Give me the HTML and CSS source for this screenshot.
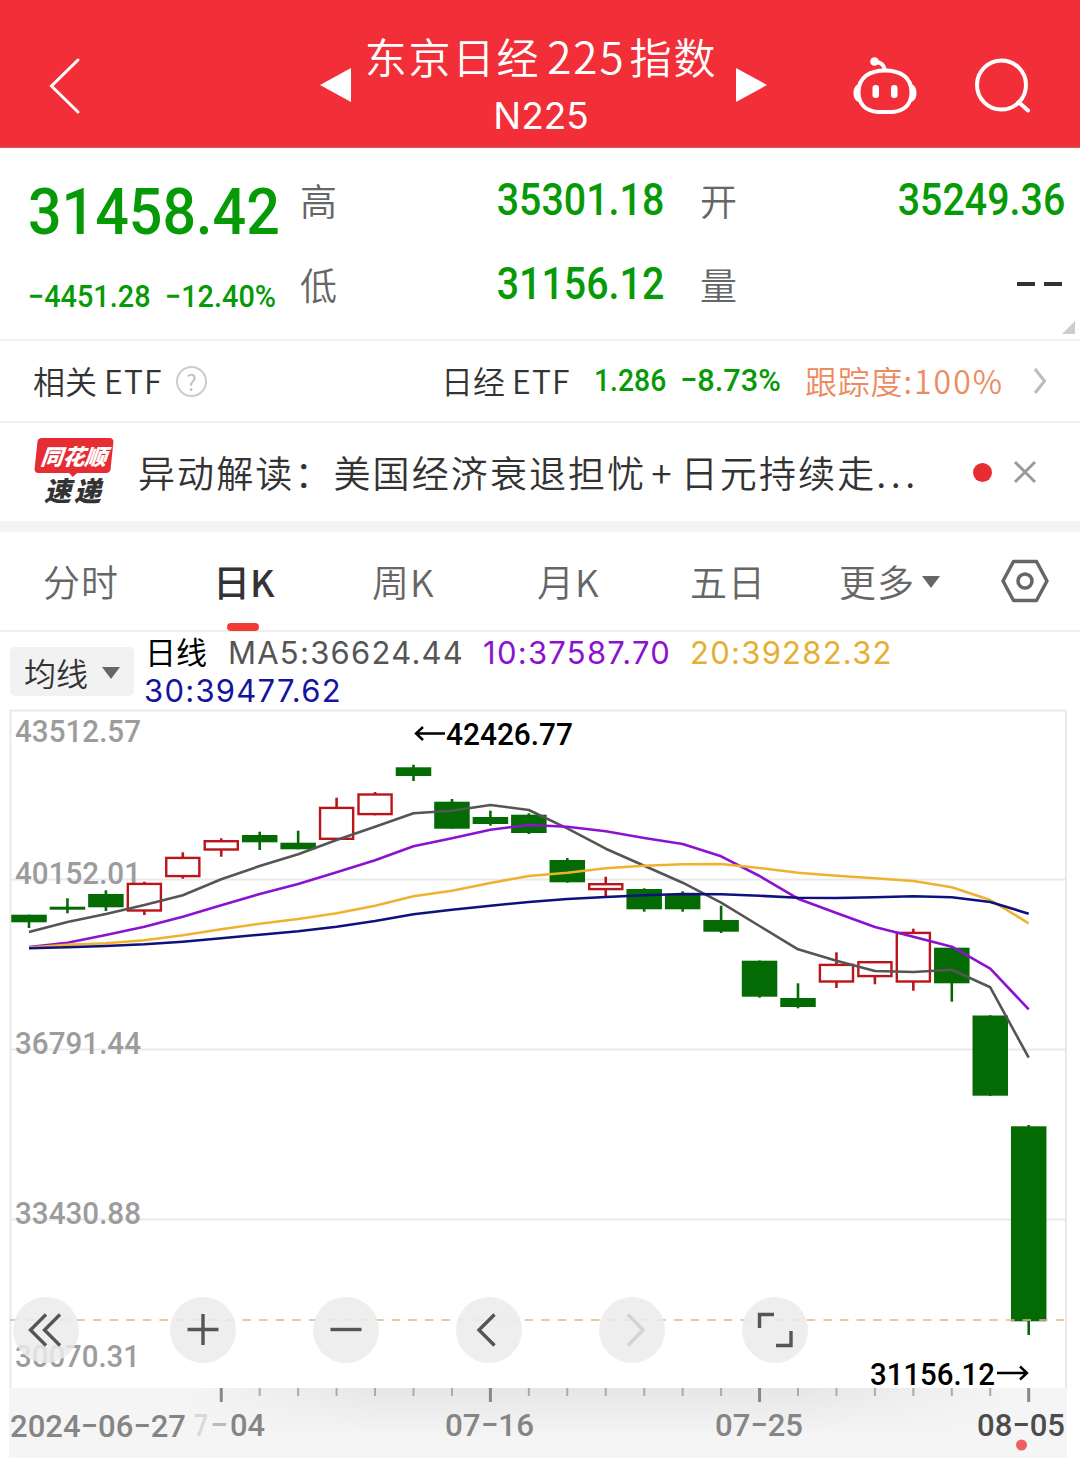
FILE: index.html
```html
<!DOCTYPE html>
<html lang="zh-CN">
<head>
    <meta charset="UTF-8">
    <meta name="viewport" content="width=device-width, initial-scale=1.0">
    <title>东京日经225指数</title>
    <link rel="stylesheet" href="styles.css">
</head>
<body>
    <header class="header">
        <svg class="back" width="36" height="60" viewBox="0 0 36 60"><path d="M31 4 4.500 30 31 56"/></svg>
        <div class="switcher">
            <svg width="32" height="36" viewBox="0 0 32 36"><path d="M0 17 31 0v34z"/></svg>
            <div class="title">
                <h1>东京日经<span>225</span>指数</h1>
                <p>N225</p>
            </div>
            <svg width="32" height="36" viewBox="0 0 32 36"><path d="M32 17 1 0v34z"/></svg>
        </div>
        <div class="header-icons">
            <svg width="64" height="60" viewBox="0 0 64 60">
                <path d="M32 14.500C47 14.500 58.500 21 58.500 36c0 13-8 19-19 20H25C13.500 55 5.500 49 5.500 36 5.500 21 17 14.500 32 14.500z"/>
                <path d="M22 6c6 0 9 3 10 8"/>
                <path class="solid" d="M6 28c-4 1-5.500 5-5.500 9S2 45 6 46zM58 28c4 1 5.500 5 5.500 9S62 45 58 46z"/>
                <circle class="solid" cx="21.500" cy="5.500" r="4.300"/>
                <rect class="solid" x="19.500" y="29" width="6.500" height="13" rx="3"/>
                <rect class="solid" x="38" y="29" width="6.500" height="13" rx="3"/>
            </svg>
            <svg class="search" width="60" height="60" viewBox="0 0 60 60">
                <circle cx="27.500" cy="29" r="24.500"/>
                <path d="M44.500 46 54 54.500"/>
            </svg>
        </div>
    </header>

    <section class="quote">
        <div class="price">
            <div class="num last">31458.42</div>
            <div class="change"><span class="num">−4451.28</span><span class="num">−12.40%</span></div>
        </div>
        <dl class="stats">
            <dt>高</dt><dd><span class="num">35301.18</span></dd>
            <dt>开</dt><dd><span class="num">35249.36</span></dd>
            <dt>低</dt><dd><span class="num">31156.12</span></dd>
            <dt>量</dt><dd class="none"><i></i><i></i></dd>
        </dl>
        <span class="corner"></span>
    </section>

    <section class="etf">
        <span class="etf-label">相关<b>ETF</b></span>
        <span class="help">?</span>
        <span class="etf-name">日经<b>ETF</b></span>
        <span class="num etf-price">1.286</span>
        <span class="num etf-rate">−8.73%</span>
        <span class="track">跟踪度<b>:100%</b></span>
        <svg class="more" width="14" height="28" viewBox="0 0 14 28"><path d="M2 2 11.500 14 2 26"/></svg>
    </section>

    <section class="news">
        <div class="logo">
            <span class="logo-top">同花顺</span>
            <span class="logo-bottom">速递</span>
        </div>
        <p class="news-text">异动解读：美国经济衰退担忧<span class="plus">+</span>日元持续走<span class="dots">...</span></p>
        <span class="dot"></span>
        <svg class="close" width="24" height="24" viewBox="0 0 24 24"><path d="M2 2 22 22M22 2 2 22"/></svg>
    </section>

    <nav class="tabs">
        <a class="tab">分时</a>
        <a class="tab active">日K</a>
        <a class="tab">周K</a>
        <a class="tab">月K</a>
        <a class="tab">五日</a>
        <a class="tab">更多<i class="caret"></i></a>
        <svg class="settings" width="48" height="44" viewBox="0 0 48 44">
            <path d="M12.500 2.500H35.500L46 22 35.500 41.500H12.500L2 22z"/>
            <circle cx="24" cy="22" r="7"/>
        </svg>
    </nav>

    <section class="legend">
        <button class="ma-button">均线<i class="caret"></i></button>
        <div class="ma-list">
            <span class="period">日线</span>
            <span class="ma5">MA5:36624.44</span>
            <span class="ma10">10:37587.70</span>
            <span class="ma20">20:39282.32</span>
            <span class="ma30">30:39477.62</span>
        </div>
    </section>

    <section class="chart">
        <svg id="chart" width="1080" height="749" viewBox="0 709 1080 749">
            <defs>
                <linearGradient id="shade" x1="0" y1="0" x2="0" y2="1">
                    <stop offset="0" stop-color="#e6e6e6"/>
                    <stop offset="0.700" stop-color="#f5f5f5"/>
                </linearGradient>
                <linearGradient id="sides" x1="0" y1="0" x2="1" y2="0">
                    <stop offset="0.160" stop-color="#f5f5f5"/>
                    <stop offset="0.350" stop-color="#f5f5f5" stop-opacity="0"/>
                    <stop offset="0.750" stop-color="#f5f5f5" stop-opacity="0"/>
                    <stop offset="0.950" stop-color="#f5f5f5"/>
                </linearGradient>
            </defs>
            <g class="grid">
                <path d="M10.500 1388V710.500H1066V1388"/>
                <path d="M10 879.500H1066M10 1049.500H1066M10 1219.500H1066"/>
            </g>
            <rect x="9" y="1388" width="1058" height="70" fill="url(#shade)"/>
            <rect x="9" y="1388" width="1058" height="70" fill="url(#sides)"/>
            <g class="scale">
                <text x="15" y="741.500" textLength="126">43512.57</text>
                <text x="15" y="884" textLength="126">40152.01</text>
                <text x="15" y="1054" textLength="126">36791.44</text>
                <text x="15" y="1224" textLength="126">33430.88</text>
                <text x="15" y="1367" textLength="125">30070.31</text>
            </g>
            <g id="candles"></g>
            <g id="averages"></g>
            <path class="current" d="M10 1320H1066"/>
            <g id="ticks"></g>
            <g class="marks">
                <path d="M445 733.500H416M423 727 416 733.500 423 740"/>
                <text x="446" y="744.500" textLength="127">42426.77</text>
                <text x="870" y="1384.500" textLength="125">31156.12</text>
                <path d="M997 1373H1027M1020 1366.500 1027 1373 1020 1379.500"/>
            </g>
            <g class="dates">
                <text x="10" y="1437" textLength="176">2024−06−27</text>
                <text x="194" y="1436" textLength="14" class="faint">7</text>
                <text x="210" y="1436" textLength="18" class="half">−</text>
                <text x="230" y="1436" textLength="35">04</text>
                <text x="445" y="1436" textLength="89">07−16</text>
                <text x="715" y="1436" textLength="88">07−25</text>
                <text x="977" y="1436" textLength="88" class="latest">08−05</text>
            </g>
            <circle cx="1021.500" cy="1445" r="5.500" fill="#ee5f64"/>
        </svg>
        <div class="tools">
            <button><svg viewBox="0 0 66 66"><path d="M33 17.500 17.500 33 33 48.500M47 17.500 31.500 33 47 48.500"/></svg></button>
            <button><svg viewBox="0 0 66 66"><path d="M33 17V48M17.500 32.500H48.500"/></svg></button>
            <button><svg viewBox="0 0 66 66"><path d="M17.500 32.500H48.500"/></svg></button>
            <button><svg viewBox="0 0 66 66"><path d="M38.500 17.500 23 33 38.500 48.500"/></svg></button>
            <button class="disabled"><svg viewBox="0 0 66 66"><path d="M29 17.500 44 33 29 48.500"/></svg></button>
            <button><svg viewBox="0 0 66 66"><path d="M17.500 31V17.500H32M49 34V48.500H34"/></svg></button>
        </div>
    </section>

    <script src="chart.js"></script>
</body>
</html>
```
FILE: styles.css
```css
* {
    margin: 0;
    padding: 0;
    box-sizing: border-box;
}

body {
    width: 1080px;
    font-family: 'Noto Sans CJK SC', sans-serif;
    font-weight: 350;
    background: #fff;
    color: #333;
    overflow-x: hidden;
}

svg {
    display: block;
    flex: none;
}

i {
    font-style: normal;
}

button {
    border: none;
    font: inherit;
}

/* condensed digits */
.num {
    display: inline-block;
    font-family: Roboto, sans-serif;
    font-weight: 500;
    color: #069a06;
    white-space: nowrap;
    transform: scaleX(0.885);
    transform-origin: left center;
}

.caret {
    display: inline-block;
    border: 9px solid transparent;
    border-top: 12px solid #666;
    border-bottom: none;
}

/* header */
.header {
    height: 148px;
    display: flex;
    align-items: center;
    background: #f22f38;
    border-bottom: 1px solid #c9605f;
    color: #fff;
    padding: 24px 46px 0 47px;
}

.header svg {
    fill: none;
    stroke: #fff;
    stroke-width: 4;
    stroke-linecap: round;
}

.header .back {
    stroke-width: 3;
}

.switcher {
    display: flex;
    align-items: center;
    margin-left: 237px;
    width: 447px;
    justify-content: space-between;
}

.header .switcher svg {
    fill: #fff;
    stroke: none;
}

.title {
    text-align: center;
    margin: 2px 5px 0 0;
}

.title h1 {
    font-size: 42px;
    font-weight: 350;
    line-height: 58px;
    letter-spacing: 1.9px;
    white-space: nowrap;
}

.title h1 span {
    font-size: 44px;
    margin: 0 4px 0 7px;
}

.title p {
    font-size: 37px;
    line-height: 62px;
    font-family: Inter, sans-serif;
    font-weight: 400;
}

.header-icons {
    display: flex;
    gap: 57px;
    margin-left: 86px;
}

.header-icons .solid {
    fill: #fff;
    stroke: none;
}

/* quote */
.quote {
    position: relative;
    height: 193px;
    display: flex;
    border-bottom: 2px solid #f0f0f0;
}

.price {
    width: 300px;
    padding-left: 28px;
}

.last {
    font-size: 65px;
    line-height: 80px;
    margin-top: 24px;
    transform: scaleX(0.91);
}

.change {
    display: flex;
    font-size: 31px;
    line-height: 40px;
    margin-top: 25px;
}

.change .num {
    width: 140px;
    transform: scaleX(0.93);
}

.change .num + .num {
    margin-left: 2px;
}

.stats {
    flex: 1;
    display: grid;
    grid-template-columns: 37px 327px 73px 1fr;
    grid-template-rows: 84px 84px;
    padding: 10px 15px 0 0;
    align-items: center;
}

.stats dt {
    font-size: 37px;
    color: #666;
}

.stats dt:nth-of-type(even) {
    justify-self: end;
}

.stats dd {
    text-align: right;
}

.stats .num {
    font-size: 44px;
    transform: scaleX(0.895);
    transform-origin: right center;
}

.stats .none {
    display: flex;
    justify-content: flex-end;
    gap: 9px;
    padding-right: 3px;
}

.none i {
    width: 18px;
    height: 4px;
    background: #333;
}

.corner {
    position: absolute;
    right: 5px;
    bottom: 5px;
    border-left: 13px solid transparent;
    border-bottom: 13px solid #ccc;
}

/* related etf */
.etf {
    height: 82px;
    display: flex;
    align-items: center;
    border-bottom: 2px solid #eee;
    padding-left: 33px;
    font-size: 32px;
    white-space: nowrap;
}

.etf b {
    font-weight: 350;
    letter-spacing: 1.200px;
    margin-left: 7px;
}

.etf > span {
    margin-bottom: 3px;
}

.etf-label {
    width: 143px;
}

.etf .help {
    width: 31px;
    height: 31px;
    margin-bottom: 0;
    border: 2px solid #ccc;
    border-radius: 50%;
    color: #bbb;
    font-size: 22px;
    line-height: 27px;
    text-align: center;
}

.etf-name {
    margin-left: 234px;
    width: 153px;
}

.etf-price {
    width: 86px;
}

.etf-rate {
    width: 125px;
}

.etf .etf-rate {
    transform: scaleX(0.96);
}

.track {
    color: #ee8a5f;
    width: 228px;
    letter-spacing: 0.800px;
}

.etf .track b {
    margin: 0;
    letter-spacing: 2px;
}

.more {
    fill: none;
    stroke: #bbb;
    stroke-width: 3;
}

/* news */
.news {
    height: 109px;
    display: flex;
    align-items: center;
    border-bottom: 11px solid #f4f4f4;
    padding-left: 36px;
}

.logo {
    width: 102px;
    display: flex;
    flex-direction: column;
    font-weight: 900;
    font-style: italic;
    font-size: 22px;
    white-space: nowrap;
}

.logo-top {
    position: relative;
    width: 76px;
    height: 35px;
    border-radius: 4px;
    line-height: 34px;
    text-align: center;
    color: #fff;
    background: #e52d33;
    transform: skewX(-6deg);
}

.logo-top::after {
    content: '';
    position: absolute;
    left: 34px;
    top: 34px;
    border: 5px solid transparent;
    border-top-color: #e52d33;
    border-bottom: none;
}

.logo-bottom {
    padding-left: 8px;
    line-height: 33px;
    font-size: 27px;
    letter-spacing: 3px;
}

.news-text {
    width: 834px;
    font-size: 37px;
    letter-spacing: 2.100px;
    white-space: nowrap;
}

.plus {
    margin: 0 7px 0 5px;
}

.dots {
    letter-spacing: 4.500px;
}

.dot {
    width: 19px;
    height: 19px;
    border-radius: 50%;
    background: #e62e32;
    margin-left: 1px;
}

.close {
    margin-left: 21px;
    stroke: #999;
    stroke-width: 3;
}

/* tabs */
.tabs {
    height: 100px;
    display: flex;
    align-items: center;
    border-bottom: 2px solid #eee;
    padding-left: 43px;
}

.tab {
    position: relative;
    font-size: 37px;
    letter-spacing: 1px;
    color: #666;
    white-space: nowrap;
    width: 170px;
}

.tab.active {
    font-weight: 500;
    color: #333;
    width: 159px;
    letter-spacing: 0;
}

.tab:nth-child(3) {
    width: 165px;
}

.tab:nth-child(4) {
    width: 153px;
}

.tab:nth-child(5) {
    width: 149px;
}

.tab:nth-child(6) {
    width: 162px;
}

.tab.active::after {
    content: '';
    position: absolute;
    left: 14px;
    bottom: -23px;
    width: 32px;
    height: 8px;
    border-radius: 4px;
    background: #f23b32;
}

.tab .caret {
    margin: 0 0 9px 7px;
}

.settings {
    fill: none;
    stroke: #666;
    stroke-width: 3.500;
    stroke-linejoin: round;
}

/* moving averages */
.legend {
    height: 77px;
    display: flex;
    padding-left: 10px;
}

.ma-button {
    width: 124px;
    height: 49px;
    margin-top: 15px;
    border-radius: 5px;
    background: #f2f2f2;
    font-size: 32px;
    line-height: 46px;
    color: #333;
}

.ma-button .caret {
    margin: 0 0 7px 14px;
}

.ma-list {
    width: 780px;
    margin-left: 10px;
    line-height: 38px;
    font-family: Inter, sans-serif;
    font-weight: 400;
    font-size: 31px;
    letter-spacing: 1.250px;
}

.period {
    font-family: 'Noto Sans CJK SC', sans-serif;
    letter-spacing: 0;
    color: #000;
    margin-left: 1px;
}

.ma5 {
    color: #555;
    margin: 0 9px 0 11px;
}

.ma10 {
    color: #8a12d0;
}

.ma20 {
    color: #e6ae32;
    margin-left: 9px;
}

.ma30 {
    color: #14149c;
}

/* chart */
.chart {
    position: relative;
}

.chart text {
    font-family: Roboto, sans-serif;
    font-size: 32px;
}

.grid {
    fill: none;
    stroke: #e9e9e9;
    stroke-width: 2;
}

.scale text {
    fill: #9c9c9c;
    font-weight: 500;
}

.up rect {
    fill: #fff;
    stroke: #b9151b;
    stroke-width: 2.400;
}

.up path {
    stroke: #b9151b;
    stroke-width: 2.600;
}

.down rect {
    fill: #046a04;
}

.down path {
    stroke: #046a04;
    stroke-width: 2.600;
}

#averages path {
    fill: none;
    stroke-width: 2.600;
    stroke-linejoin: round;
}

.current {
    stroke: #dcb595;
    stroke-width: 1.600;
    stroke-dasharray: 8.500 8.100;
}

#ticks path {
    stroke: #aaa;
    stroke-width: 2;
}

#ticks .major {
    stroke: #888;
    stroke-width: 3;
}

.marks path {
    fill: none;
    stroke: #000;
    stroke-width: 2.400;
}

.marks text {
    fill: #000;
    font-weight: 500;
}

.dates text {
    fill: #858585;
    font-weight: 500;
}

.dates .faint {
    fill: #d8d8d8;
}

.dates .half {
    fill: #bbb;
}

.dates .latest {
    fill: #4c4c4c;
}

.tools {
    position: absolute;
    left: 13px;
    top: 588px;
    display: flex;
    gap: 77px;
}

.tools button {
    width: 66px;
    height: 66px;
    border-radius: 50%;
    background: rgba(235, 235, 235, 0.85);
}

.tools button:first-child {
    margin-right: 14px;
}

.tools svg {
    fill: none;
    stroke: #555;
    stroke-width: 3.400;
}

.tools .disabled svg {
    stroke: #d3d3d3;
}
```
FILE: chart.js
```js
const SVG = 'http://www.w3.org/2000/svg';
const START = 29;
const STEP = 38.45;
const WIDTH = 35.5;

// direction, high, body top, body bottom, low
const candles = [
    ['down', 914.7, 914.7, 922.3, 928],
    ['down', 898.3, 906.7, 909.7, 913.3],
    ['down', 890.3, 894, 907.3, 911],
    ['up', 881.7, 882.7, 911.7, 915],
    ['up', 852.3, 856.7, 877.3, 878.7],
    ['up', 838.3, 840, 850.7, 856.7],
    ['down', 831.7, 835, 842.3, 850],
    ['down', 830.7, 842.7, 849.3, 849.3],
    ['up', 797.7, 806.7, 840, 840],
    ['up', 792, 793.3, 815.3, 815.3],
    ['down', 764.7, 767.3, 776, 781],
    ['down', 799, 801.7, 828.7, 828.7],
    ['down', 810.7, 817, 824, 825.7],
    ['down', 813.3, 814.7, 833, 834],
    ['down', 858, 860, 882.3, 882.7],
    ['up', 876.7, 883, 890.3, 896],
    ['down', 888.3, 889, 909.3, 911.7],
    ['down', 891.3, 894, 909.3, 911.7],
    ['down', 905.7, 920, 931.7, 933],
    ['down', 960.5, 960.7, 996.7, 997.7],
    ['down', 983.3, 998, 1007, 1008.3],
    ['up', 952.3, 963.7, 982.7, 988],
    ['up', 961, 961, 977.3, 984.3],
    ['up', 928.7, 931.7, 982.7, 990.7],
    ['down', 947.7, 947.7, 983.3, 1001.7],
    ['down', 1015.3, 1015.5, 1095.7, 1096],
    ['down', 1125, 1126.3, 1321.3, 1335]
];

const averages = {
    '#555555': [932, 922, 914, 905, 895.3, 879.3, 866, 854.3, 840, 826.7, 813.3, 810.7, 805, 810, 828.3, 848.7, 865.7, 882.7, 902.7, 926, 949.3, 960.7, 971, 972, 969.7, 987.3, 1057.7],
    '#8a12d0': [947, 942.7, 935, 926.7, 916.7, 905.3, 894, 884, 872.3, 860.3, 846.3, 838.3, 829.7, 825, 826.7, 831.3, 838, 844, 856.3, 876, 898.7, 913, 927, 936.7, 946.7, 968.7, 1009.3],
    '#efb22e': [947.5, 944.7, 943.3, 940.3, 935.3, 929.3, 923.7, 919, 913.3, 905.7, 896.3, 890.7, 883, 876, 872.7, 868.3, 865.7, 864.3, 864, 868, 872.7, 875.7, 878.3, 881, 887.3, 900, 923.3],
    '#10107e': [948.3, 947.3, 946, 944.3, 941.7, 938.3, 934.7, 931.3, 926.7, 921, 914.3, 909.7, 905.7, 902, 899, 897, 895.3, 894, 894.3, 895.7, 897.7, 898, 897.3, 896.3, 897.3, 902, 913.7]
};

function add(parent, name, attrs) {
    const el = document.createElementNS(SVG, name);
    for (const key in attrs) el.setAttribute(key, attrs[key]);
    parent.appendChild(el);
    return el;
}

candles.forEach(([dir, high, top, bottom, low], i) => {
    const x = START + i * STEP;
    const g = add(document.getElementById('candles'), 'g', { class: dir });
    add(g, 'path', { d: `M${x} ${high}V${low}` });
    // outlined bodies keep their stroke inside the candle width
    const inset = dir === 'up' ? 1.2 : 0;
    add(g, 'rect', {
        x: x - WIDTH / 2 + inset,
        y: top + inset,
        width: WIDTH - inset * 2,
        height: bottom - top - inset * 2
    });
});

for (const color in averages) {
    const points = averages[color].map((y, i) => `${START + i * STEP} ${y}`);
    add(document.getElementById('averages'), 'path', { d: 'M' + points.join('L'), stroke: color });
}

for (let i = 5; i < candles.length; i++) {
    const major = (i - 5) % 7 === 0;
    add(document.getElementById('ticks'), 'path', {
        d: `M${START + i * STEP} 1388V${major ? 1402 : 1396}`,
        class: major ? 'major' : 'minor'
    });
}

document.querySelectorAll('.chart text').forEach((t) => t.setAttribute('lengthAdjust', 'spacingAndGlyphs'));
```
